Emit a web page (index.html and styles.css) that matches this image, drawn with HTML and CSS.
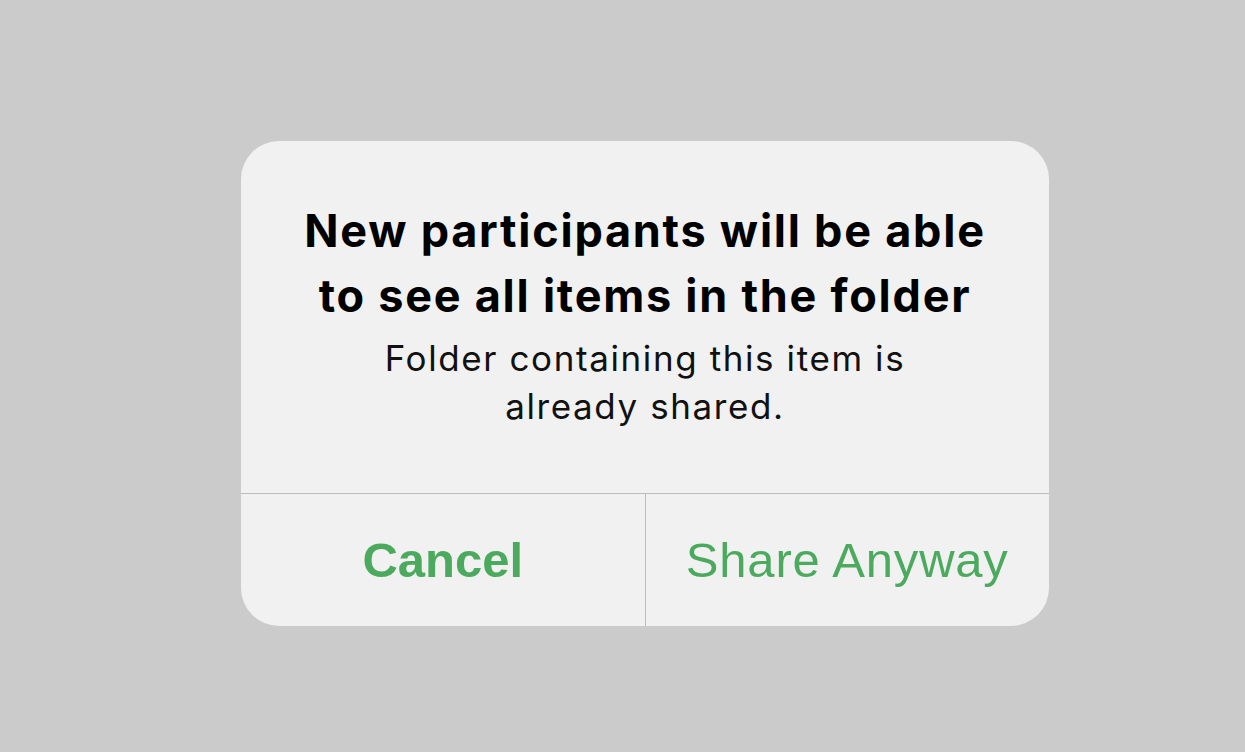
FILE: index.html
```html
<!DOCTYPE html>
<html lang="en">
    <head>
        <meta charset="UTF-8" />
        <meta name="viewport" content="width=device-width, initial-scale=1.0" />
        <title>Share Folder Alert</title>
        <link rel="stylesheet" href="styles.css">
    </head>
    <body>
        <div class="alert">
            <div class="alert-body">
                <h1 class="alert-title">New participants will be able<br />to see all items in the folder</h1>
                <p class="alert-message">Folder containing this item is<br />already shared.</p>
            </div>
            <div class="alert-actions">
                <button class="alert-button cancel">Cancel</button>
                <button class="alert-button share">Share Anyway</button>
            </div>
        </div>
    </body>
</html>
```

FILE: styles.css
```css
body {
    margin: 0;
    padding: 141px 0 0 241px;
    background-color: #cbcbcb;
    font-family: Inter, "Noto Sans", sans-serif;
    height: 752px;
    box-sizing: border-box;
    overflow: hidden;
}
.alert {
    width: 808px;
    height: 485px;
    background-color: #f1f1f1;
    border-radius: 38px;
    overflow: hidden;
    display: flex;
    flex-direction: column;
}
.alert-body {
    flex: 1;
    padding: 57px 20px 0;
    text-align: center;
    border-bottom: 1px solid #bcbcbc;
}
.alert-title {
    margin: 0;
    font-size: 45px;
    font-weight: 700;
    line-height: 65px;
    letter-spacing: 1.75px;
    color: #000;
}
.alert-message {
    margin: 6px 0 0;
    font-size: 35px;
    line-height: 48px;
    letter-spacing: 1.6px;
    color: #111;
}
.alert-actions {
    display: flex;
    height: 132px;
}
.alert-button {
    flex: 1;
    border: none;
    background: none;
    font-family: "Liberation Sans", Arial, sans-serif;
    font-size: 49px;
    color: #4caa5f;
    padding: 0;
    cursor: pointer;
}
.alert-button.cancel {
    font-weight: 700;
    border-right: 1px solid #bcbcbc;
}
.alert-button.share {
    letter-spacing: 0.8px;
}
```
